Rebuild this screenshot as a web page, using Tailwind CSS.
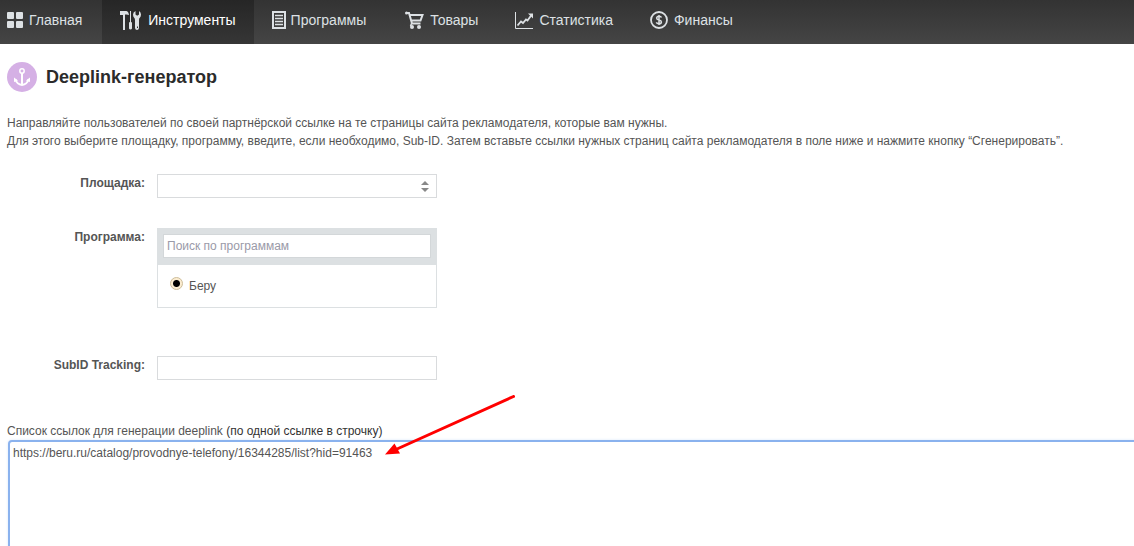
<!DOCTYPE html>
<html lang="ru">
<head>
<meta charset="utf-8">
<meta name="viewport" content="width=device-width, initial-scale=1">
<title>Deeplink-генератор</title>
<script src="https://cdn.jsdelivr.net/npm/@tailwindcss/browser@4"></script>
</head>
<body class="min-h-screen overflow-hidden bg-white font-['Liberation_Sans',Arial,sans-serif] text-xs text-[#555]">
<nav class="flex h-11 items-stretch bg-linear-to-b from-[#333] to-[#454545] text-sm text-[#dde1e4]">
  <a href="#" class="flex items-center gap-1.5 pr-5 pb-1 pl-[7px]">
    <svg class="size-4" viewBox="0 0 16 16" fill="currentColor"><rect width="7" height="7" rx="1"/><rect x="9" width="7" height="7" rx="1"/><rect y="9" width="7" height="7" rx="1"/><rect x="9" y="9" width="7" height="7" rx="1"/></svg>
    Главная</a>
  <a href="#" aria-current="page" class="flex items-center gap-[7px] bg-linear-to-b from-[#262626] to-[#363636] px-[18px] pb-1 text-white">
    <svg class="h-5 w-[21px] text-[#dde1e4]" viewBox="0 0 21 20" fill="currentColor"><path d="M0 1h6.500Q8.500 1.500 9 5L6.500 4.500H5V20H3V5H0z"/><path d="M10 1h1v11h.5l.5 1v5.500q-.5 1-1.500 1T9 18.500V13l.5-1h.5z"/><path d="M15.500 1v3.500l1.700 1.300 1.800-1.300V1q2 1 2 3.700 0 2-1.800 3.800l-.2 1.500v8q-.3 2-2 2t-2-2v-8l-.3-1.500Q13 6.700 13 4.700 13 2 15.500 1zm1.500 15.500v1.500h1v-1.500z" fill-rule="evenodd"/></svg>
    Инструменты</a>
  <a href="#" class="flex items-center gap-[5px] pr-[21px] pb-1 pl-[18px]">
    <svg class="h-[18px] w-[14px]" viewBox="0 0 14 18" fill="none" stroke="currentColor" stroke-width="2"><path d="M1 1h12v16H1z"/><path d="M3 4.500h8M3 7.500h8M3 10.500h8M3 13.500h8" stroke-width="1.500"/></svg>
    Программы</a>
  <a href="#" class="flex items-center gap-[6px] pr-[19px] pb-1 pl-[18px]">
    <svg class="h-[18px] w-[19px]" viewBox="0 0 19 18" fill="none" stroke="currentColor" stroke-width="2"><path d="M1.500 2h2.500L7 12.500h8.500M5 4h12.500l-2 5.500H6.500"/><path d="M6.500 12.500 5.500 15" stroke-width="1.500"/><circle cx="1.500" cy="2" r="1.500" fill="currentColor" stroke="none"/><circle cx="7" cy="16" r="2" fill="currentColor" stroke="none"/><circle cx="14" cy="16" r="2" fill="currentColor" stroke="none"/></svg>
    Товары</a>
  <a href="#" class="flex items-center gap-[6px] pr-[19px] pb-1 pl-[18px]">
    <svg class="size-[18px]" viewBox="0 0 18 18" fill="none" stroke="currentColor"><path d="M.5 1v16.500H18"/><path d="M2.500 14.500 6 10.500l2 1.500 3-3.500 1.500 1 4-5.500" stroke-width="1.800"/><path d="M13 2.500h5v5z" fill="currentColor" stroke="none"/></svg>
    Статистика</a>
  <a href="#" class="flex items-center gap-[6px] px-[18px] pb-1">
    <svg class="size-[18px]" viewBox="0 0 18 18" fill="none" stroke="currentColor" stroke-width="1.800"><circle cx="9" cy="9" r="8"/><path d="M11.500 6.500Q11 5.300 9 5.300T6.600 7Q6.600 8.500 9 9t2.400 1.900Q11.400 12.700 9 12.700T6.500 11.300M9 4v10" stroke-width="1.500"/></svg>
    Финансы</a>
</nav>
<main class="pt-[18px] pl-[7px]">
  <h1 class="flex items-center gap-[9px] text-lg leading-[30px] font-bold text-[#2b2b2b]">
    <svg class="size-[30px]" viewBox="0 0 30 30" fill="none" stroke="#fff"><circle cx="15" cy="15" r="15" fill="#d5b0e5" stroke="none"/><circle cx="15" cy="9" r="2.200" stroke-width="1.500"/><path d="M15 11v12M8.500 17.500q1.500 5 6.500 5.500 5-.5 6.500-5.500" stroke-width="2"/><path d="M7 15.500v4.500l4-1.500zM23 15.500v4.500l-4-1.500z" fill="#fff" stroke="none"/></svg>
    Deeplink-генератор</h1>
  <p class="pt-[22px] leading-[18px]">Направляйте пользователей по своей партнёрской ссылке на те страницы сайта рекламодателя, которые вам нужны.<br>Для этого выберите площадку, программу, введите, если необходимо, Sub-ID. Затем вставьте ссылки нужных страниц сайта рекламодателя в поле ниже и нажмите кнопку “Сгенерировать”.</p>
  <form>
    <div class="flex gap-3 pt-6">
      <label for="site" class="w-[138px] text-right leading-[18px] font-bold">Площадка:</label>
      <div class="relative w-[280px]">
        <select id="site" class="block h-6 w-full appearance-none border border-[#d9dbdd] bg-white px-1"><option></option></select>
        <svg class="pointer-events-none absolute top-[7px] right-2 h-[11px] w-2" viewBox="0 0 8 11" fill="#888"><path d="M0 4 4 0l4 4zM0 7h8l-4 4z"/></svg>
      </div>
    </div>
    <div class="flex gap-3 pt-[30px]">
      <label for="program" class="w-[138px] text-right leading-[18px] font-bold">Программа:</label>
      <div class="w-[280px] border border-[#dce0e2]">
        <div class="bg-[#dce0e2] p-[5px] pb-[7px]">
          <input id="program" type="text" placeholder="Поиск по программам" class="block h-6 w-full border border-[#d3d7d9] bg-white px-[3px] placeholder:text-[#9a9aa8]">
        </div>
        <div class="flex gap-1.5 p-3">
          <input id="beru" type="radio" name="program" checked class="size-[13px] appearance-none rounded-full border border-[#cdbd9b] bg-[#fbecd0] bg-[radial-gradient(circle,#000_3px,transparent_4px)]">
          <label for="beru" class="leading-[18px]">Беру</label>
        </div>
      </div>
    </div>
    <div class="flex gap-3 pt-12">
      <label for="subid" class="w-[138px] text-right leading-[18px] font-bold">SubID Tracking:</label>
      <input id="subid" type="text" class="h-6 w-[280px] border border-[#d9dbdd] bg-white px-1">
    </div>
    <div class="relative -mr-2 pt-[42px]">
      <label for="links" class="block leading-[18px]">Список ссылок для генерации deeplink <span class="text-[#333]">(по одной ссылке в строчку)</span></label>
      <textarea id="links" spellcheck="false" class="ml-px block h-[180px] w-full resize-none rounded-sm border-2 border-[#8ab2ee] bg-white px-[3px] py-0.5 leading-[18px] shadow-[0_0_3px_#dbe7fa] outline-none">https://beru.ru/catalog/provodnye-telefony/16344285/list?hid=91463</textarea>
      <svg class="pointer-events-none absolute top-[15px] left-[378px] h-[60px] w-[131px]" viewBox="0 0 131 60"><path d="M128.500 1.500 12 54" stroke="#f00" stroke-width="3" stroke-linecap="round"/><path d="M0 59.500 9.500 48.500l5.500 10z" fill="#f00"/></svg>
    </div>
  </form>
</main>
</body>
</html>
